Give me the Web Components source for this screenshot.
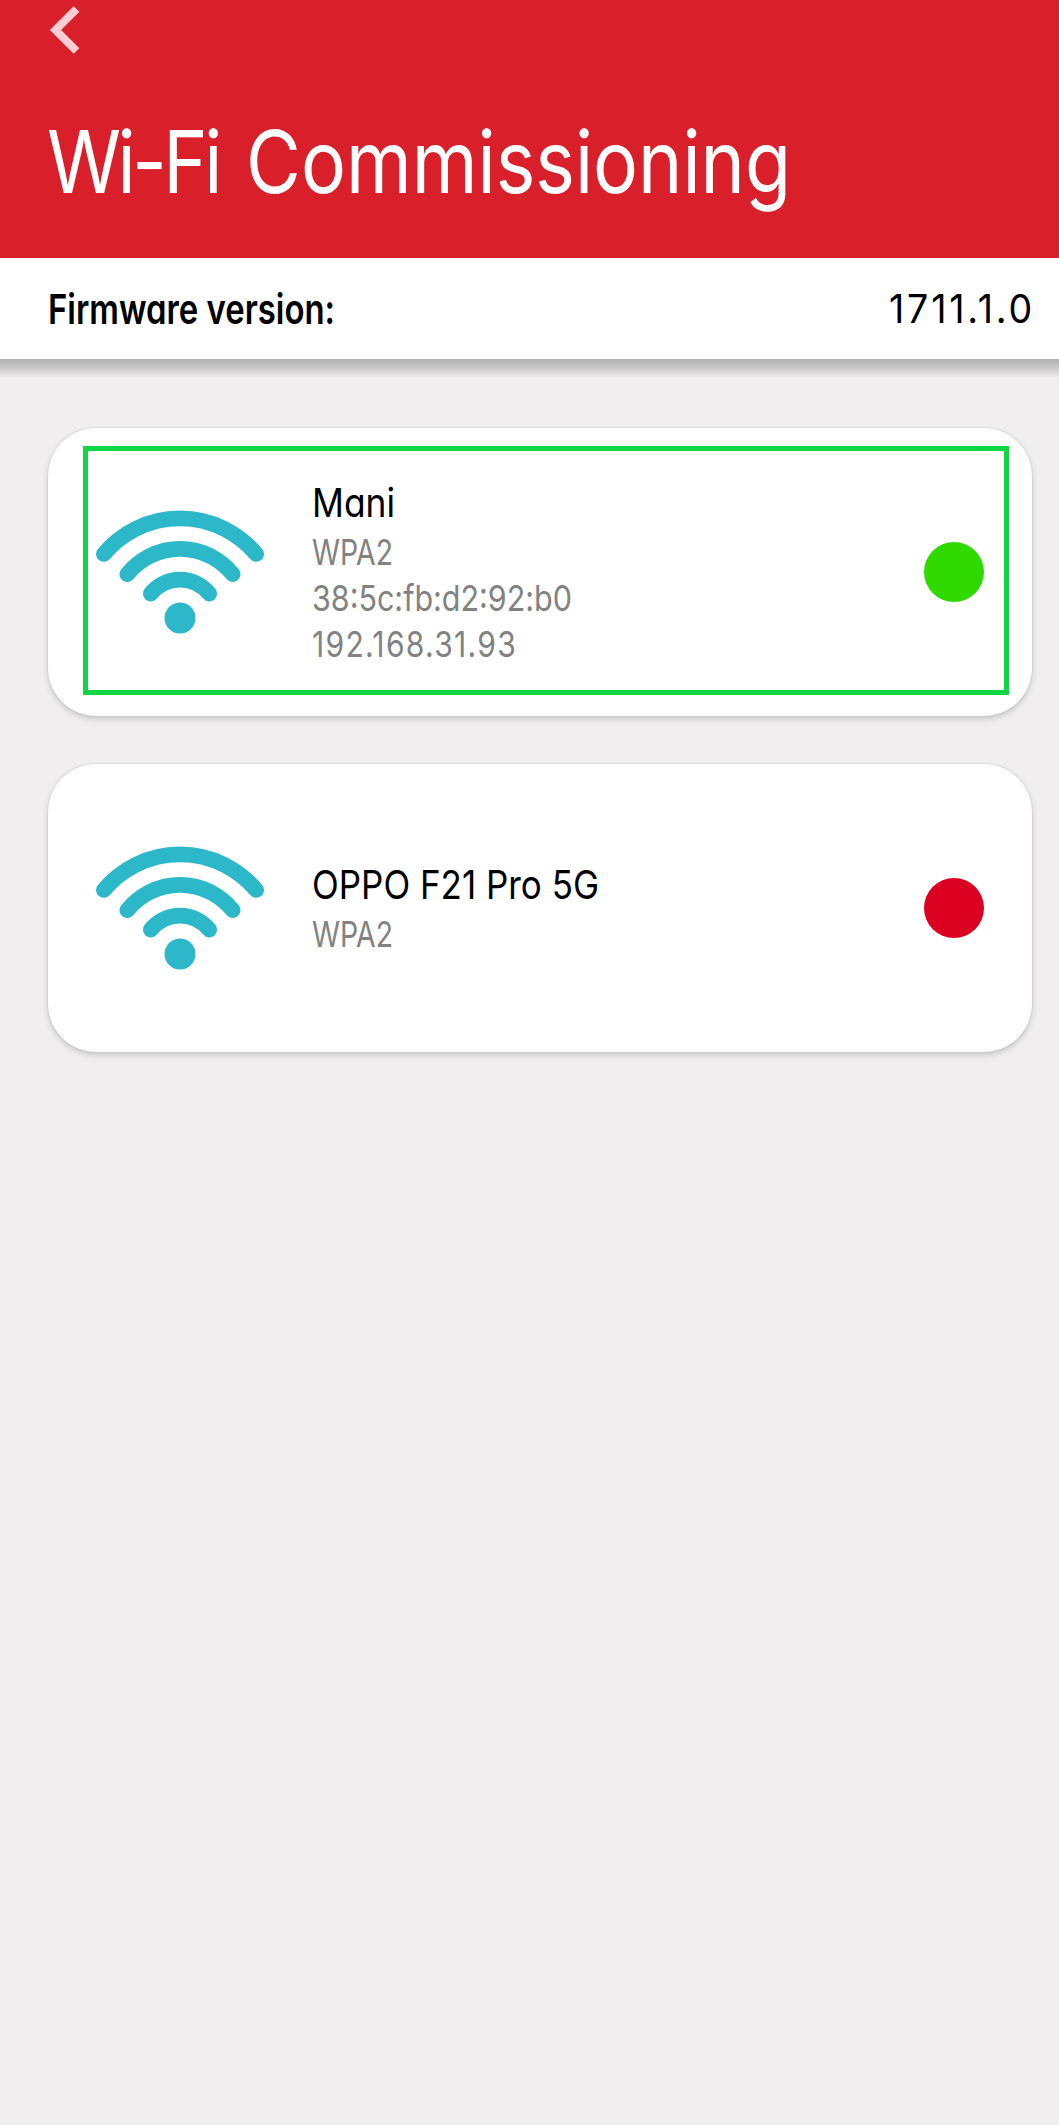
<!DOCTYPE html>
<html lang="en">
<head>
<meta charset="utf-8">
<title>Wi-Fi Commissioning</title>
<style>
html,body{margin:0;background:#f0eeef}
body{font-family:Inter,"Liberation Sans",sans-serif;color:#000;overflow:hidden}
</style>
</head>
<body>
<commissioning-page></commissioning-page>
<script>
// A single line of condensed text, scaled horizontally to the width attribute.
class FitText extends HTMLElement {
  connectedCallback() {
    const root = this.attachShadow({mode: 'open'});
    root.innerHTML = `<style>
      :host{display:block;white-space:nowrap;font-feature-settings:"cv11" 1;flex:none}
      span{display:inline-block;transform-origin:0 50%}
    </style><span><slot></slot></span>`;
    const width = Number(this.getAttribute('width'));
    const span = root.querySelector('span');
    this.style.width = width + 'px';
    span.style.transform = `scaleX(${width / span.getBoundingClientRect().width})`;
  }
}
customElements.define('fit-text', FitText);

class BackButton extends HTMLElement {
  connectedCallback() {
    this.attachShadow({mode: 'open'}).innerHTML = `<style>
      :host{display:block;height:60px}svg{display:block}
    </style><svg width="36" height="60" viewBox="0 0 36 60"><path d="M28.5 9 7.5 30 28.5 51" fill="none" stroke="#ffced5" stroke-width="8"/></svg>`;
  }
}
customElements.define('back-button', BackButton);

class AppHeader extends HTMLElement {
  connectedCallback() {
    this.attachShadow({mode: 'open'}).innerHTML = `<style>
      :host{display:flex;flex-direction:column;box-sizing:border-box;height:258px;padding-left:48px;background:#d91f2a;color:#fff}
      fit-text{font-size:87px;line-height:104px;margin:50px 0 0 -1px}
    </style><back-button></back-button><fit-text width="744"><slot></slot></fit-text>`;
  }
}
customElements.define('app-header', AppHeader);

class FirmwareBar extends HTMLElement {
  connectedCallback() {
    this.attachShadow({mode: 'open'}).innerHTML = `<style>
      :host{display:block}
      .bar{display:flex;justify-content:space-between;align-items:center;height:101px;box-sizing:border-box;padding:0 24px 0 48px;background:#fff;font-size:41px;line-height:50px}
      .label{font-weight:600}
      .value{letter-spacing:3px;font-size:40px}
      .shade{height:19px;background:linear-gradient(#b2b1b2,#c3c2c2 35%,#dfdddd 78%,#f0eeef)}
    </style><div class="bar"><fit-text class="label" width="287"><slot></slot></fit-text><fit-text class="value" width="146">${this.getAttribute('version')}</fit-text></div><div class="shade"></div>`;
  }
}
customElements.define('firmware-bar', FirmwareBar);

class WifiIcon extends HTMLElement {
  connectedCallback() {
    this.attachShadow({mode: 'open'}).innerHTML = `<style>
      :host{display:block;flex:none;width:168px;height:124px}svg{display:block}
    </style><svg width="168" height="124" viewBox="0 0 168 124"><g fill="none" stroke="#2cb8c9" stroke-width="15.6" stroke-linecap="round">
      <path d="M7.8 44A99.3 99.3 0 0 1 160.2 44"/><path d="M31.3 64.2A67.5 67.5 0 0 1 136.7 64.2"/><path d="M54.7 83.7A37.6 37.6 0 0 1 113.3 83.7"/></g>
      <circle cx="84" cy="108" r="15.5" fill="#2cb8c9"/></svg>`;
  }
}
customElements.define('wifi-icon', WifiIcon);

class NetworkCard extends HTMLElement {
  connectedCallback() {
    this.attachShadow({mode: 'open'}).innerHTML = `<style>
      :host{position:relative;display:flex;align-items:center;box-sizing:border-box;height:288px;padding:0 48px;border-radius:48px;background:#fff;box-shadow:0 3px 6px rgba(0,0,0,.17),0 0 2px rgba(0,0,0,.14)}
      .info{flex:1;display:flex;flex-direction:column;margin-left:48px}
      .status{width:60px;height:60px;border-radius:50%;background:${this.getAttribute('status')}}
      :host([selected])::after{content:"";position:absolute;left:35px;top:18px;width:916px;height:239px;border:5px solid #10d545}
    </style><wifi-icon></wifi-icon><div class="info"><slot></slot></div><div class="status"></div>`;
  }
}
customElements.define('network-card', NetworkCard);

class CommissioningPage extends HTMLElement {
  connectedCallback() {
    this.attachShadow({mode: 'open'}).innerHTML = `<style>
      :host{display:block;min-height:2125px;background:#f0eeef}
      main{display:flex;flex-direction:column;gap:48px;padding:50px 27px 0 48px}
      .tight{letter-spacing:-4px;word-spacing:11px}
      .name{font-size:40px;line-height:52px}
      .detail{font-size:36px;line-height:46px;color:#828282}
      .address{letter-spacing:1.5px}
    </style>
    <app-header><span class="tight">Wi-Fi </span>Commissioning</app-header>
    <firmware-bar version="1711.1.0">Firmware version:</firmware-bar>
    <main>
      <network-card selected status="#30da00">
        <fit-text class="name" width="83">Mani</fit-text>
        <fit-text class="detail" width="81">WPA2</fit-text>
        <fit-text class="detail" width="260">38:5c:fb:d2:92:b0</fit-text>
        <fit-text class="detail address" width="205">192.168.31.93</fit-text>
      </network-card>
      <network-card status="#db0020">
        <fit-text class="name" width="287">OPPO F21 Pro 5G</fit-text>
        <fit-text class="detail" width="81">WPA2</fit-text>
      </network-card>
    </main>`;
  }
}
customElements.define('commissioning-page', CommissioningPage);
</script>
</body>
</html>
